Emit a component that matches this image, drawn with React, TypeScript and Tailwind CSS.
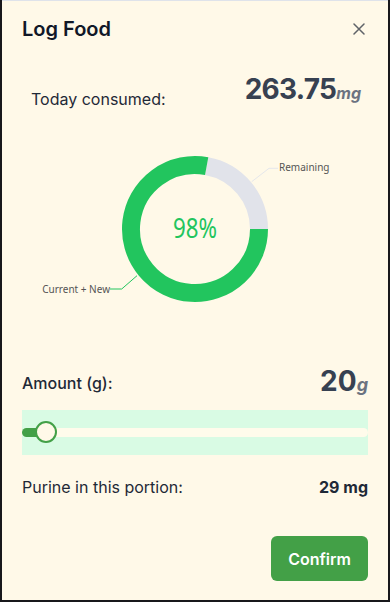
import React from "react";

export default function App() {
  const cx = 173;
  const cy = 101;
  const r = 64;
  const a = (10.5 * Math.PI) / 180;
  const sx = cx + r * Math.sin(a);
  const sy = cy - r * Math.cos(a);
  const gray = `M ${sx} ${sy} A ${r} ${r} 0 0 1 ${cx + r} ${cy}`;
  const green = `M ${cx + r} ${cy} A ${r} ${r} 0 1 1 ${sx} ${sy}`;
  return (
    <div className="w-[390px] h-[602px] bg-[#18181b] overflow-hidden" style={{ fontFamily: "Inter, 'Noto Sans', sans-serif" }}>
      <div className="ml-[2px] w-[386px] h-[600px] bg-[#fff9e8] border-t border-[#dfe3ea] px-5 flex flex-col">
        {/* header */}
        <div className="mt-[14px] h-7 flex items-center justify-between">
          <h2 className="text-xl leading-7 font-semibold text-[#111827]">Log Food</h2>
          <svg width="12" height="12" viewBox="0 0 12 12" className="mr-[3px]">
            <path d="M1 1 L11 11 M11 1 L1 11" stroke="#5f6368" strokeWidth="1.5" strokeLinecap="round" />
          </svg>
        </div>
        {/* consumed */}
        <div className="mt-8 h-9 flex items-end justify-between pl-[9px] pr-[7px]">
          <span className="text-base leading-6 text-[#1f2937]">Today consumed:</span>
          <span className="leading-9 text-[#374151]">
            <span className="text-[28px] font-bold tracking-tight">263.75</span>
            <span className="text-base font-bold italic text-[#6b7280]">mg</span>
          </span>
        </div>
        {/* chart */}
        <svg width="346" height="200" className="mt-[17px] block" style={{ fontFamily: "'Noto Sans', sans-serif" }}>
          <path d={gray} fill="none" stroke="#e1e3ea" strokeWidth="18" />
          <path d={green} fill="none" stroke="#22c55e" strokeWidth="18" />
          <text x={cx} y={110} textAnchor="middle" fontSize="27" fill="#22c55e" textLength="44" lengthAdjust="spacingAndGlyphs">98%</text>
          <polyline points="229.7,53.7 247,40.3 256,40.3" fill="none" stroke="#e5e7eb" strokeWidth="1" />
          <text x={257} y={43} fontSize="10" fill="#555555">Remaining</text>
          <polyline points="115,147.7 99.7,161 88,161" fill="none" stroke="#22c55e" strokeWidth="1" />
          <text x={88} y={164.5} textAnchor="end" fontSize="10" fill="#555555">Current + New</text>
        </svg>
        {/* amount */}
        <div className="mt-[37px] h-9 flex items-center justify-between">
          <span className="text-base leading-6 font-medium text-[#1f2937]">Amount (g):</span>
          <span className="leading-9 text-[#374151]">
            <span className="text-[28px] font-bold">20</span>
            <span className="text-lg font-bold italic text-[#6b7280]">g</span>
          </span>
        </div>
        {/* slider */}
        <div className="mt-[9px] h-[45px] bg-[#d9fbe4] flex items-center">
          <div className="relative w-full h-[9px] rounded-full bg-[#fffbeb]">
            <div className="absolute left-0 top-0 h-full w-[20px] rounded-l-full bg-[#43a047]" />
            <div className="absolute left-[13px] top-[-7px] w-[22px] h-[22px] rounded-full border-2 border-[#43a047] bg-[#fff9e8]" />
          </div>
        </div>
        {/* purine */}
        <div className="mt-5 h-6 flex items-center justify-between">
          <span className="text-base leading-6 text-[#1f2937]">Purine in this portion:</span>
          <span className="text-base leading-6 font-bold text-[#1f2937]">29 mg</span>
        </div>
        {/* confirm */}
        <div className="mt-[37px] flex justify-end">
          <button className="w-[97px] h-[45px] rounded-md bg-[#43a047] text-white text-base font-semibold">Confirm</button>
        </div>
      </div>
    </div>
  );
}
